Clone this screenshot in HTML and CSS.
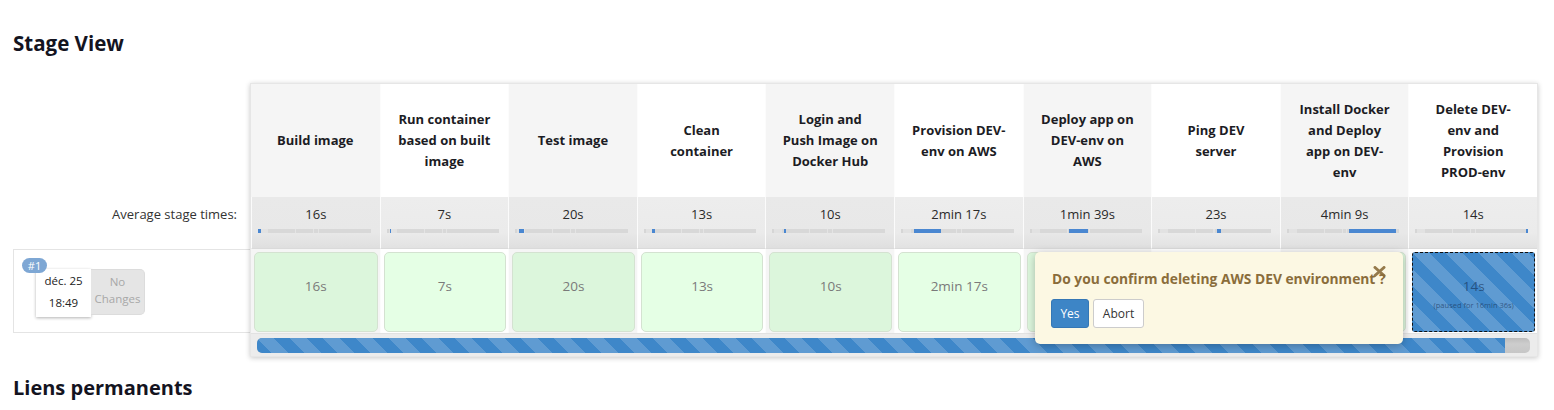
FILE: index.html
```html
<!DOCTYPE html>
<html lang="fr">
<head>
<meta charset="utf-8">
<title>Stage View</title>
<link rel="stylesheet" href="styles.css">
</head>
<body>
<div class="page">
  <h2 class="section-title">Stage View</h2>
  <div class="stage-view">
    <div class="builds-col">
      <div class="head-spacer"></div>
      <div class="avg-label">Average stage times:</div>
      <div class="build-info">
        <div class="build-card">
          <span class="badge">#1</span>
          <div class="build-date">
            <span>déc. 25</span>
            <span>18:49</span>
          </div>
          <div class="build-changes">No<br>Changes</div>
        </div>
      </div>
    </div>

    <div class="stages">
      <div class="stage-cols">
        <div class="stage-col">
          <div class="stage-head"><span>Build image</span></div>
          <div class="stage-avg"><div class="avg-time">16s</div><div class="avg-bar"><span class="seg" style="margin-left:0%;width:2.7%"></span></div></div>
          <div class="stage-run"><div class="cell success">16s</div></div>
        </div>
        <div class="stage-col">
          <div class="stage-head"><span>Run container based on built image</span></div>
          <div class="stage-avg"><div class="avg-time">7s</div><div class="avg-bar"><span class="seg" style="margin-left:2.7%;width:0.9%"></span></div></div>
          <div class="stage-run"><div class="cell success">7s</div></div>
        </div>
        <div class="stage-col">
          <div class="stage-head"><span>Test image</span></div>
          <div class="stage-avg"><div class="avg-time">20s</div><div class="avg-bar"><span class="seg" style="margin-left:3.6%;width:4.5%"></span></div></div>
          <div class="stage-run"><div class="cell success">20s</div></div>
        </div>
        <div class="stage-col">
          <div class="stage-head"><span>Clean container</span></div>
          <div class="stage-avg"><div class="avg-time">13s</div><div class="avg-bar"><span class="seg" style="margin-left:7.1%;width:2.7%"></span></div></div>
          <div class="stage-run"><div class="cell success">13s</div></div>
        </div>
        <div class="stage-col">
          <div class="stage-head"><span>Login and Push Image on Docker Hub</span></div>
          <div class="stage-avg"><div class="avg-time">10s</div><div class="avg-bar"><span class="seg" style="margin-left:10.7%;width:1.8%"></span></div></div>
          <div class="stage-run"><div class="cell success">10s</div></div>
        </div>
        <div class="stage-col">
          <div class="stage-head"><span>Provision DEV-env on AWS</span></div>
          <div class="stage-avg"><div class="avg-time">2min 17s</div><div class="avg-bar"><span class="seg" style="margin-left:11.6%;width:24.1%"></span></div></div>
          <div class="stage-run"><div class="cell success">2min 17s</div></div>
        </div>
        <div class="stage-col">
          <div class="stage-head"><span>Deploy app on DEV-env on AWS</span></div>
          <div class="stage-avg"><div class="avg-time">1min 39s</div><div class="avg-bar"><span class="seg" style="margin-left:34.8%;width:17%"></span></div></div>
          <div class="stage-run"><div class="cell success">1min 39s</div></div>
        </div>
        <div class="stage-col">
          <div class="stage-head"><span>Ping DEV server</span></div>
          <div class="stage-avg"><div class="avg-time">23s</div><div class="avg-bar"><span class="seg" style="margin-left:51.8%;width:3.6%"></span></div></div>
          <div class="stage-run"><div class="cell success">23s</div></div>
        </div>
        <div class="stage-col">
          <div class="stage-head"><span>Install Docker and Deploy app on DEV-env</span></div>
          <div class="stage-avg"><div class="avg-time">4min 9s</div><div class="avg-bar"><span class="seg" style="margin-left:55.4%;width:42%"></span></div></div>
          <div class="stage-run"><div class="cell success">4min 9s</div></div>
        </div>
        <div class="stage-col">
          <div class="stage-head"><span>Delete DEV-env and Provision PROD-env</span></div>
          <div class="stage-avg"><div class="avg-time">14s</div><div class="avg-bar"><span class="seg" style="margin-left:98.2%;width:1.8%"></span></div></div>
          <div class="stage-run"><div class="cell paused striped">14s<small>(paused for 16min 36s)</small></div></div>
        </div>
      </div>

      <div class="progress-row">
        <div class="progress-track"><div class="progress-fill striped" style="width:98%"></div></div>
      </div>

      <div class="popover">
        <p class="popover-text">Do you confirm deleting AWS DEV environment ?</p>
        <div class="popover-actions">
          <button class="btn btn-primary" type="button">Yes</button>
          <button class="btn btn-default" type="button">Abort</button>
        </div>
        <span class="popover-close" aria-label="close">
          <svg width="13" height="11" viewBox="0 0 13 11"><path d="M2 1.5 L11 9.5 M11 1.5 L2 9.5" stroke="#8a6d3b" stroke-width="3" stroke-linecap="round" fill="none"/></svg>
        </span>
      </div>
    </div>
  </div>
  <h2 class="section-title links-title">Liens permanents</h2>
</div>
</body>
</html>
```

FILE: styles.css
```css
* { box-sizing: border-box; }

body {
  margin: 0;
  background: #fff;
  color: #333;
  font-family: "Open Sans", "Liberation Sans", sans-serif;
  font-size: 13px;
}

.page {
  padding: 0 13px;
}

.section-title {
  margin: 29px 0 26px;
  font-size: 20.5px;
  line-height: 28px;
  font-weight: 700;
  color: #14141f;
}

.links-title {
  margin: 17px 0 0;
  font-size: 20px;
}

.stage-view {
  display: flex;
  align-items: flex-start;
}

/* left column */
.builds-col {
  width: 237px;
  flex: none;
}

.head-spacer {
  height: 114px;
}

.avg-label {
  height: 52px;
  padding: 8px 13px 0 0;
  line-height: 18px;
  text-align: right;
  color: #333;
}

.build-info {
  height: 84px;
  border: 1px solid #e4e4e4;
  border-right: none;
  padding: 19px 0 0 22px;
}

.build-card {
  position: relative;
  display: flex;
  align-items: flex-start;
}

.badge {
  position: absolute;
  left: -14px;
  top: -11px;
  width: 25px;
  height: 15px;
  border-radius: 8px;
  background: #7ea7d4;
  color: #fff;
  font-size: 11px;
  line-height: 15px;
  text-align: center;
}

.build-date {
  width: 55px;
  height: 48px;
  background: #fff;
  box-shadow: 0 1px 3px rgba(0, 0, 0, 0.3);
  display: flex;
  flex-direction: column;
  align-items: center;
  padding-top: 1px;
  font-size: 11.5px;
  line-height: 22px;
  color: #222;
}

.build-changes {
  width: 54px;
  height: 46px;
  background: #e5e5e5;
  border: 1px solid #dcdcdc;
  border-left: none;
  border-radius: 0 5px 5px 0;
  color: #a8a8a8;
  font-size: 11.5px;
  line-height: 17px;
  text-align: center;
  padding-top: 3px;
}

/* stage table */
.stages {
  position: relative;
  width: 1288px;
  flex: none;
  border: 1px solid #e6e6e6;
  box-shadow: 0 1px 5px rgba(0, 0, 0, 0.22);
  background: #fff;
}

.stage-cols {
  display: grid;
  grid-template-columns: repeat(10, 1fr);
}

.stage-head {
  height: 113px;
  display: flex;
  align-items: center;
  justify-content: center;
  padding: 0 14px;
  text-align: center;
  font-weight: 700;
  font-size: 13px;
  line-height: 21px;
  color: #1c1c24;
}

.stage-head span {
  max-width: 95px;
}

.stage-avg {
  height: 52px;
  padding-top: 8px;
  background: linear-gradient(to bottom, #ededed 0%, #ebebeb 70%, #e2e2e2 100%);
  border-left: 1px solid #fbfbfb;
  border-bottom: 1px solid #dadada;
}

.avg-time {
  line-height: 18px;
  text-align: center;
  color: #2a2a2a;
}

.avg-bar {
  display: flex;
  height: 4px;
  margin: 6px 9px 0 6px;
  background: linear-gradient(to right, #d6d6d6 0, #d6d6d6 2%, #e2e2e2 2%, #e2e2e2 9%, #d8d8d8 9%, #d8d8d8 33%, #e4e4e4 33%, #e4e4e4 34%, #d8d8d8 34%, #d8d8d8 49%, #e4e4e4 49%, #e4e4e4 50%, #d8d8d8 50%, #d8d8d8 53%, #e4e4e4 53%, #e4e4e4 54%, #d8d8d8 54%);
}

.seg {
  display: block;
  height: 4px;
  min-width: 1px;
  background: #4a87d1;
}

.stage-run {
  height: 84px;
  padding: 3px 2px 1px 3px;
  background: #fff;
}

.stage-col:nth-child(odd) .stage-head,
.stage-col:nth-child(odd) .stage-run {
  background: #f5f5f5;
}

.stage-col:nth-child(odd) .stage-avg {
  background: linear-gradient(to bottom, #e9e9e9 0%, #e8e8e8 70%, #dfdfdf 100%);
}

.stage-col + .stage-col .stage-head,
.stage-col + .stage-col .stage-run {
  border-left: 1px solid #fcfcfc;
}

.cell {
  height: 80px;
  border-radius: 5px;
  padding-top: 24px;
  text-align: center;
  font-size: 13.5px;
  line-height: 18px;
  color: #7a7a7a;
}

.success {
  background: rgba(0, 255, 0, 0.1);
  border: 1px solid #d4e2d1;
}

.striped {
  background-color: #3e87c9;
  background-image: linear-gradient(45deg,
    rgba(255, 255, 255, 0.17) 25%, transparent 25%,
    transparent 50%, rgba(255, 255, 255, 0.17) 50%,
    rgba(255, 255, 255, 0.17) 75%, transparent 75%, transparent);
  background-size: 33px 33px;
}

.paused {
  border: 1px dashed #111;
  border-radius: 3px;
  color: rgba(20, 45, 80, 0.62);
}

.paused small {
  display: block;
  margin-top: 5px;
  font-size: 7.5px;
  line-height: 10px;
}

.progress-row {
  border-top: 1px solid #e2e2e2;
  background: #ececec;
  padding: 4px 7px 3px 6px;
}

.progress-track {
  height: 15px;
  border-radius: 5px;
  overflow: hidden;
  background: linear-gradient(to bottom, #bdbdbd, #cdcdcd 40%, #c6c6c6);
}

.progress-fill {
  height: 15px;
}

/* popover */
.popover {
  position: absolute;
  left: 784px;
  top: 168px;
  width: 368px;
  height: 92px;
  padding: 18px 16px 0 17px;
  background: #fcf8e3;
  border-radius: 5px;
  box-shadow: 0 2px 8px rgba(0, 0, 0, 0.25);
}

.popover-text {
  margin: 0;
  font-size: 13.8px;
  line-height: 18px;
  font-weight: 700;
  color: #8a6d3b;
  white-space: nowrap;
}

.popover-actions {
  display: flex;
  gap: 4px;
  margin: 11px 0 0 -1px;
}

.btn {
  height: 29px;
  padding: 0 10px;
  border-radius: 3px;
  font-family: inherit;
  font-size: 12px;
  line-height: 27px;
}

.btn-primary {
  width: 38px;
  padding: 0;
  background: #3d85c6;
  border: 1px solid #3577b5;
  color: #fff;
}

.btn-default {
  width: 51px;
  padding: 0;
  background: #fff;
  border: 1px solid #ccc;
  color: #333;
}

.popover-close {
  position: absolute;
  left: 338px;
  top: 14px;
  display: block;
  width: 13px;
  height: 11px;
  opacity: 0.9;
}

.popover-close svg {
  display: block;
}
```
